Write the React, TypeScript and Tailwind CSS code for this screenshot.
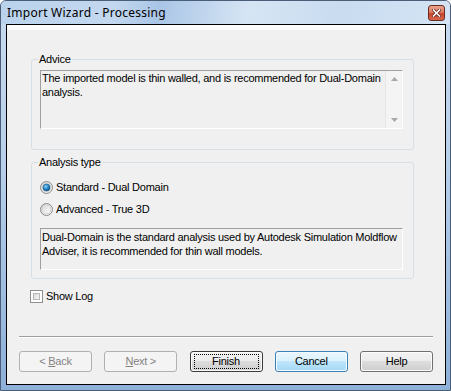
import React from 'react';

const sans = "font-['Liberation_Sans',Arial,sans-serif]";

function Radio({ checked }: { checked?: boolean }) {
  return (
    <svg width="13" height="13" viewBox="0 0 13 13" className="shrink-0">
      <defs>
        <linearGradient id={checked ? 'rfOn' : 'rfOff'} x1="0" y1="0" x2="1" y2="1">
          <stop offset="0" stopColor="#d6d6d6" />
          <stop offset="1" stopColor="#ffffff" />
        </linearGradient>
        <radialGradient id="rdot" cx="0.4" cy="0.35" r="0.7">
          <stop offset="0" stopColor="#8fd3f7" />
          <stop offset="0.5" stopColor="#2a8bcf" />
          <stop offset="1" stopColor="#0d4777" />
        </radialGradient>
      </defs>
      <circle cx="6.5" cy="6.5" r="6" fill={`url(#${checked ? 'rfOn' : 'rfOff'})`} stroke="#8a8a8a" strokeWidth="1" />
      <circle cx="6.5" cy="6.5" r="4.5" fill="none" stroke="#cfcfcf" strokeWidth="1" />
      {checked && <circle cx="6.5" cy="6.5" r="3.5" fill="url(#rdot)" stroke="#1b5d8f" strokeWidth="0.6" />}
    </svg>
  );
}

function Checkbox() {
  return (
    <div className="w-[13px] h-[13px] border border-[#8e8f8f] bg-white p-[2px] shrink-0">
      <div className="w-full h-full border border-[#b8b8b8] bg-gradient-to-br from-[#d8d8d8] to-[#f6f6f6]" />
    </div>
  );
}

function Button({
  label,
  disabled,
  variant,
}: {
  label: React.ReactNode;
  disabled?: boolean;
  variant?: 'focus' | 'default';
}) {
  if (disabled) {
    return (
      <div className="w-[73px] h-[21px] rounded-[3px] border border-[#adb2b5] bg-[#f4f4f4] flex items-center justify-center text-[#838383]">
        {label}
      </div>
    );
  }
  if (variant === 'default') {
    return (
      <div className="w-[73px] h-[21px] rounded-[3px] border border-[#3c7fb1] p-[1px] bg-[#f3fbfe]">
        <div className="w-full h-full rounded-[2px] flex items-center justify-center bg-[linear-gradient(to_bottom,#e9f6fd_0%,#d9f0fc_50%,#bee6fd_50%,#a7d9f5_100%)]">
          {label}
        </div>
      </div>
    );
  }
  return (
    <div className={`w-[73px] h-[21px] rounded-[3px] border ${variant === 'focus' ? 'border-[#3a3a3a]' : 'border-[#707070]'} p-[1px] bg-[#fbfbfb]`}>
      <div className="w-full h-full rounded-[2px] flex items-center justify-center bg-[linear-gradient(to_bottom,#f2f2f2_0%,#ebebeb_50%,#dddddd_50%,#cfcfcf_100%)]">
        {variant === 'focus' ? (
          <div className="w-[65px] h-[15px] border border-dotted border-black flex items-center justify-center">{label}</div>
        ) : (
          label
        )}
      </div>
    </div>
  );
}

function ReadOnlyBox({ className, children }: { className: string; children: React.ReactNode }) {
  return (
    <div className={`w-[363px] border border-t-[#a0a0a0] border-l-[#a0a0a0] border-r-white border-b-white bg-[#f0f0f0] ${className}`}>
      {children}
    </div>
  );
}

export default function App() {
  return (
    <div className={`w-[451px] h-[391px] ${sans} text-[11px] tracking-[-0.25px] text-black`}>
      <div className="w-[451px] h-[391px] flex flex-col border border-[#4b5e78] rounded-t-[6px] bg-[linear-gradient(to_bottom,#c8dbef_0%,#b9d0ea_40%,#8db0d9_100%)]">
        {/* Title bar */}
        <div className="h-[23px] flex items-center justify-between pl-[6px] pr-[5px] rounded-t-[5px] bg-[linear-gradient(100deg,#bad2ec_0%,#c3d8ef_25%,#a9c5e6_35%,#d6e5f4_55%,#c9dcf0_75%,#d4e4f4_100%)]">
          <span className="font-['Noto_Sans','Open_Sans',sans-serif] text-[12px] tracking-[0.25px] leading-none mt-[1px]">Import Wizard - Processing</span>
          <div className="w-[17px] h-[16px] rounded-[3px] border border-[#6b2c20] bg-[linear-gradient(to_bottom,#eba48f_0%,#dc7a62_45%,#c7452a_55%,#d56a4f_100%)] flex items-center justify-center mt-[1px]">
            <svg width="9" height="8" viewBox="0 0 9 8">
              <path d="M1.5 1 L7.5 7 M7.5 1 L1.5 7" stroke="#5a2218" strokeWidth="3" strokeLinecap="square" />
              <path d="M1.5 1 L7.5 7 M7.5 1 L1.5 7" stroke="#ffffff" strokeWidth="1.6" strokeLinecap="square" />
            </svg>
          </div>
        </div>

        {/* Client area */}
        <div className="flex-1 ml-[5px] mr-[4px] mb-[5px] border border-black bg-[#f0f0f0] flex flex-col">
          <div className="h-[5px] bg-[#fbfbfb]" />

          <fieldset className="ml-[24px] w-[383px] mt-[23px] border border-[#d5dfe5] rounded-[3px] pl-[8px] pb-[20px]">
            <legend className="ml-[-2px] px-[1px] leading-[13px]">Advice</legend>
            <ReadOnlyBox className="mt-[4px] h-[59px] flex">
              <div className="flex-1 leading-[14px] pl-[1px] pt-[0px]">
                The imported model is thin walled, and is recommended for Dual-Domain analysis.
              </div>
              <div className="w-[17px] border-l border-[#e6e6e6] bg-[#f4f4f4] flex flex-col items-center justify-between py-[6px]">
                <svg width="7" height="4" viewBox="0 0 7 4"><path d="M0 4 L3.5 0 L7 4 Z" fill="#a8a8a8" /></svg>
                <svg width="7" height="4" viewBox="0 0 7 4"><path d="M0 0 L3.5 4 L7 0 Z" fill="#a8a8a8" /></svg>
              </div>
            </ReadOnlyBox>
          </fieldset>

          <fieldset className="ml-[24px] w-[383px] mt-[6px] border border-[#d5dfe5] rounded-[3px] pl-[8px] pb-[8px]">
            <legend className="ml-[-2px] px-[1px] leading-[13px]">Analysis type</legend>
            <div className="mt-[12px] h-[13px] flex items-center gap-[3px]">
              <Radio checked />
              <span>Standard - Dual Domain</span>
            </div>
            <div className="mt-[9px] h-[13px] flex items-center gap-[3px]">
              <Radio />
              <span>Advanced - True 3D</span>
            </div>
            <ReadOnlyBox className="mt-[12px] h-[42px] leading-[14px] pl-[1px] pt-[1px]">
              Dual-Domain is the standard analysis used by Autodesk Simulation Moldflow Adviser, it is recommended for thin wall models.
            </ReadOnlyBox>
          </fieldset>

          <div className="ml-[23px] mt-[9px] flex items-center gap-[3px]">
            <Checkbox />
            <span>Show Log</span>
          </div>

          <div className="flex-1" />

          <div className="mx-[12px] h-[2px] border-t border-[#a0a0a0] border-b border-b-white" />

          <div className="mx-[12px] mt-[13px] mb-[12px] flex justify-between">
            <Button disabled label={<span>&lt; <span className="underline">B</span>ack</span>} />
            <Button disabled label={<span><span className="underline">N</span>ext &gt;</span>} />
            <Button variant="focus" label="Finish" />
            <Button variant="default" label="Cancel" />
            <Button label="Help" />
          </div>
        </div>
      </div>
    </div>
  );
}
